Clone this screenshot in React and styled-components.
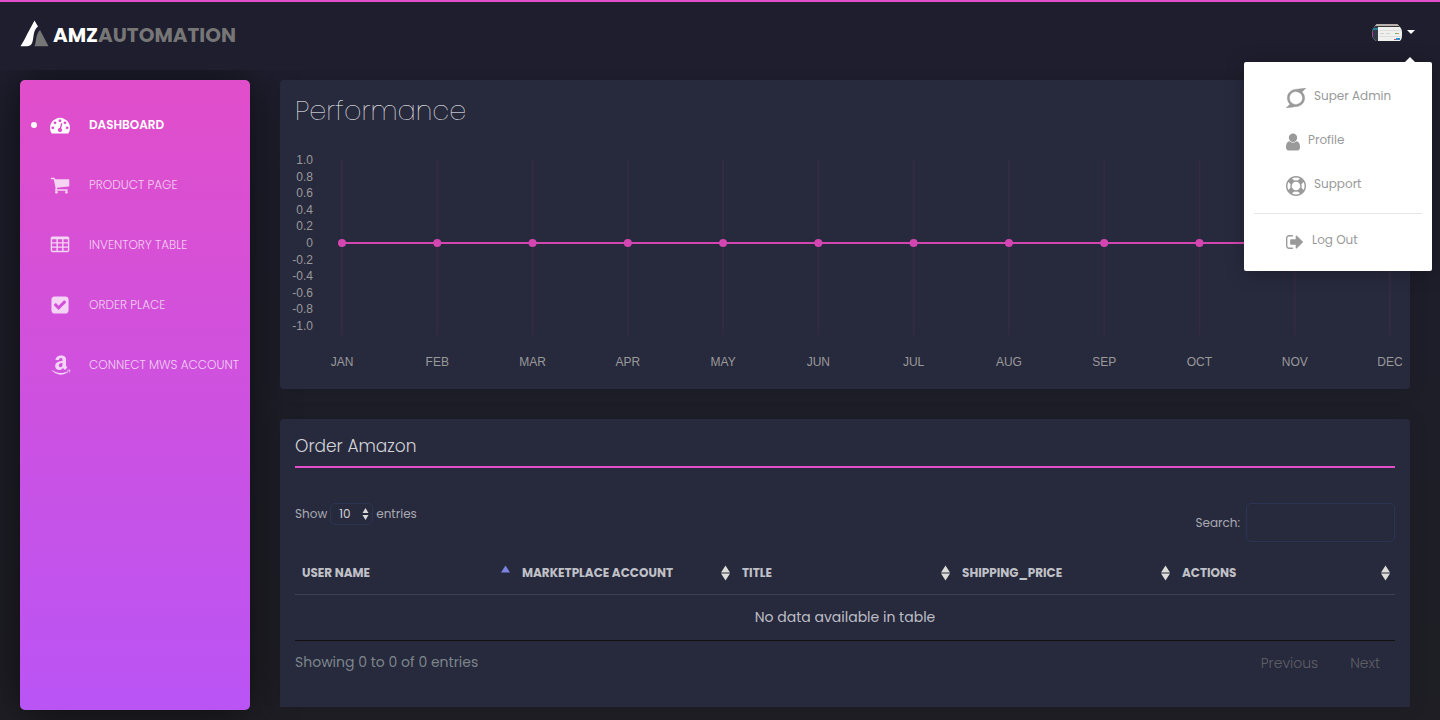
import React from "react";
import styled, { createGlobalStyle, css } from "styled-components";
import { FaAmazon, FaSuperpowers } from "react-icons/fa";

const GlobalStyle = createGlobalStyle`
  *, *::before, *::after { box-sizing: border-box; }
  body {
    margin: 0;
    min-height: 100vh;
    background: linear-gradient(#1e1e2f, #1e1e24) fixed;
    color: #c5c6cc;
    font-family: Poppins, Inter, sans-serif;
    font-size: 14px;
    overflow: hidden;
  }
  h1, h2, ul { margin: 0; padding: 0; }
  ul { list-style: none; }
  a { text-decoration: none; }
`;

/* ---------- icons ---------- */

const Glyph = styled.svg`
  display: block;
  flex: none;
  height: 20px;
  fill: currentColor;
`;

const glyphs = {
  gauge: {
    box: "0 0 1792 1792",
    width: 20,
    d: "M384 1152q0-53-37.5-90.5t-90.5-37.5-90.5 37.5-37.5 90.5 37.5 90.5 90.5 37.5 90.5-37.5 37.5-90.5zm192-448q0-53-37.5-90.5t-90.5-37.5-90.5 37.5-37.5 90.5 37.5 90.5 90.5 37.5 90.5-37.5 37.5-90.5zm428 481l101-382q6-26-7.5-48.5t-38.5-29.5-48 6.5-30 39.5l-101 382q-60 5-107 43.5t-63 98.5q-20 77 20 146t117 89 146-20 89-117q16-60-6-117t-72-91zm660-33q0-53-37.5-90.5t-90.5-37.5-90.5 37.5-37.5 90.5 37.5 90.5 90.5 37.5 90.5-37.5 37.5-90.5zm-640-640q0-53-37.5-90.5t-90.5-37.5-90.5 37.5-37.5 90.5 37.5 90.5 90.5 37.5 90.5-37.5 37.5-90.5zm448 192q0-53-37.5-90.5t-90.5-37.5-90.5 37.5-37.5 90.5 37.5 90.5 90.5 37.5 90.5-37.5 37.5-90.5zm320 448q0 261-141 483-19 29-54 29h-1402q-35 0-54-29-141-221-141-483 0-182 71-348t191-286 286-191 348-71 348 71 286 191 191 286 71 348z",
  },
  cart: {
    box: "0 0 1792 1792",
    width: 20,
    d: "M704 1536q0 52-38 90t-90 38-90-38-38-90 38-90 90-38 90 38 38 90zm896 0q0 52-38 90t-90 38-90-38-38-90 38-90 90-38 90 38 38 90zm128-1088v512q0 24-16.5 42.5t-40.5 21.5l-1044 122q13 60 13 70 0 16-24 64h920q26 0 45 19t19 45-19 45-45 19h-1024q-26 0-45-19t-19-45q0-11 8-31.5t16-36 21.5-40 15.5-29.5l-177-823h-204q-26 0-45-19t-19-45 19-45 45-19h256q16 0 28.5 6.5t19.5 15.5 13 24.5 8 26 5.5 29.5 4.5 26h1201q26 0 45 19t19 45z",
  },
  table: {
    box: "0 0 1792 1792",
    width: 20,
    d: "M224 128h1344q66 0 113 47t47 113v1088q0 66-47 113t-113 47h-1344q-66 0-113-47t-47-113v-1088q0-66 47-113t113-47zM192 384h384v256h-384zM704 384h384v256h-384zM1216 384h384v256h-384zM192 768h384v256h-384zM704 768h384v256h-384zM1216 768h384v256h-384zM192 1152h384v256h-384zM704 1152h384v256h-384zM1216 1152h384v256h-384z",
  },
  check: {
    box: "0 0 1792 1792",
    width: 20,
    d: "M813 1299l614-614q19-19 19-45t-19-45l-102-102q-19-19-45-19t-45 19l-467 467-211-211q-19-19-45-19t-45 19l-102 102q-19 19-19 45t19 45l358 358q19 19 45 19t45-19zm851-883v960q0 119-84.5 203.5t-203.5 84.5h-960q-119 0-203.5-84.5t-84.5-203.5v-960q0-119 84.5-203.5t203.5-84.5h960q119 0 203.5 84.5t84.5 203.5z",
  },
  user: {
    box: "256 0 1280 1792",
    width: 14,
    d: "M1536 1399q0 109-62.5 187t-150.5 78h-854q-88 0-150.5-78t-62.5-187q0-85 8.5-160.5t31.5-152 58.5-131 94-89 134.5-34.5q131 128 313 128t313-128q76 0 134.5 34.5t94 89 58.5 131 31.5 152 8.5 160.5zm-256-887q0 159-112.5 271.5t-271.5 112.5-271.5-112.5-112.5-271.5 112.5-271.5 271.5-112.5 271.5 112.5 112.5 271.5z",
  },
  ring: {
    box: "0 0 1792 1792",
    width: 20,
    d: "M896 0q182 0 348 71t286 191 191 286 71 348-71 348-191 286-286 191-348 71-348-71-286-191-191-286-71-348 71-348 191-286 286-191 348-71zm0 128q-190 0-361 90l194 194q82-28 167-28t167 28l194-194q-171-90-361-90zm-678 1129l194-194q-28-82-28-167t28-167l-194-194q-90 171-90 361t90 361zm678 407q190 0 361-90l-194-194q-82 28-167 28t-167-28l-194 194q171 90 361 90zm0-384q159 0 271.5-112.5t112.5-271.5-112.5-271.5-271.5-112.5-271.5 112.5-112.5 271.5 112.5 271.5 271.5 112.5zm484-217l194 194q90-171 90-361t-90-361l-194 194q28 82 28 167t-28 167z",
  },
  signOut: {
    box: "64 0 1664 1792",
    width: 18,
    d: "M704 1440q0 4 1 20t.5 26.5-3 23.5-10 19.5-20.5 6.5h-320q-119 0-203.5-84.5t-84.5-203.5v-704q0-119 84.5-203.5t203.5-84.5h320q13 0 22.5 9.5t9.5 22.5q0 4 1 20t.5 26.5-3 23.5-10 19.5-20.5 6.5h-320q-66 0-113 47t-47 113v704q0 66 47 113t113 47h312l11.5 1 11.5 3 8 5.500 7 9 2 13.500zm928-544q0 26-19 45l-544 544q-19 19-45 19t-45-19-19-45v-288h-448q-26 0-45-19t-19-45v-384q0-26 19-45t45-19h448v-288q0-26 19-45t45-19 45 19l544 544q19 19 19 45z",
  },
};

function Icon({ name }) {
  if (name === "amazon") return <FaAmazon size={22} aria-hidden="true" />;
  if (name === "superpowers") {
    return (
      <Glyph viewBox="0 32 448 448" width={20} stroke="currentColor" strokeWidth="8" aria-hidden="true">
        <FaSuperpowers size={512} x="-32" stroke="currentColor" strokeWidth="8" />
      </Glyph>
    );
  }
  const g = glyphs[name];
  return (
    <Glyph viewBox={g.box} width={g.width} aria-hidden="true">
      <path fillRule="evenodd" d={g.d} />
    </Glyph>
  );
}

/* ---------- header ---------- */

const Header = styled.header`
  position: relative;
  z-index: 2;
  display: flex;
  align-items: center;
  justify-content: space-between;
  height: 70px;
  padding: 0 25px 8px 20px;
  border-top: 2px solid #e14eca;
  background: #1e1e2e;
`;

const Brand = styled.a`
  display: flex;
  align-items: center;
  gap: 4px;
  padding-top: 2px;
  color: #fff;
  font: 700 20px/28px Poppins, Lato, sans-serif;
`;

const BrandName = styled.span`
  padding-top: 3px;
`;

const BrandTail = styled.span`
  color: #777676;
`;

const Account = styled.div`
  position: relative;
`;

const AccountButton = styled.button`
  display: flex;
  align-items: center;
  gap: 5px;
  padding: 0;
  border: 0;
  background: none;
  cursor: pointer;
`;

const Menu = styled.div`
  position: absolute;
  top: 38px;
  right: -17px;
  width: 188px;
  padding: 12px 10px 9px;
  border-radius: 2px;
  background: #fff;
  box-shadow: 1px 2px 20px rgba(0, 0, 0, 0.25);

  &::before {
    content: "";
    position: absolute;
    top: -5px;
    right: 17px;
    border: solid transparent;
    border-width: 0 5px 5px;
    border-bottom-color: #fff;
  }
`;

const MenuItem = styled.a`
  display: flex;
  align-items: center;
  gap: 8px;
  height: 44px;
  padding: 4px 0 0 32px;
  color: #9a9a9a;
  font-size: 12px;
  line-height: 20px;
  white-space: nowrap;
`;

const MenuText = styled.span`
  padding-bottom: 4px;
`;

const Divider = styled.hr`
  margin: 7px 0 4px;
  border: 0;
  border-top: 1px solid #e6e6e6;
`;

/* ---------- page ---------- */

const Body = styled.div`
  display: flex;
  align-items: flex-start;
  gap: 30px;
  padding: 10px 30px 0 20px;
`;

const Sidebar = styled.nav`
  flex: none;
  width: 230px;
  min-height: calc(100vh - 90px);
  padding-top: 15px;
  border-radius: 5px;
  background: linear-gradient(0deg, #ba54f5, #e14eca);
  box-shadow: 0 0 45px rgba(0, 0, 0, 0.6);
`;

const NavLink = styled.a`
  display: flex;
  align-items: center;
  height: 60px;
  padding-left: 11px;
  color: #fff;
  font-size: 12px;
  font-weight: ${(p) => (p.$active ? 600 : 300)};
  text-transform: uppercase;
  white-space: nowrap;

  &::before {
    content: "";
    width: 6px;
    height: 6px;
    border-radius: 50%;
    background: ${(p) => (p.$active ? "#fff" : "transparent")};
  }
`;

const NavIcon = styled.span`
  display: flex;
  width: 39px;
  margin-left: 13px;
  opacity: ${(p) => (p.$active ? 1 : 0.75)};
`;

const NavText = styled.span`
  opacity: ${(p) => (p.$active ? 1 : 0.7)};
`;

const Main = styled.main`
  flex: 1;
  min-width: 0;
  display: flex;
  flex-direction: column;
  gap: 30px;
`;

const Card = styled.section`
  padding: 15px;
  border-radius: ${(p) => (p.$open ? "4px 4px 0 0" : "4px")};
  background: #27293d;
  box-shadow: 0 1px 20px rgba(0, 0, 0, 0.1);
`;

const CardTitle = styled.h1`
  color: #fff;
  font-size: 27px;
  font-weight: 200;
  line-height: 32px;
`;

const SectionTitle = styled.h2`
  height: 34px;
  border-bottom: 2px solid #e14eca;
  color: #d4d4d8;
  font-size: 17px;
  font-weight: 300;
  line-height: 24px;
`;

/* ---------- chart ---------- */

const ChartBox = styled.div`
  padding: 33px 5px 0 47px;
`;

const Plot = styled.svg`
  display: block;
  width: 100%;
  height: 214px;
  overflow: visible;
  font: 12px "Liberation Sans", Arial, sans-serif;
  fill: #9a9a9a;
`;

const months = ["JAN", "FEB", "MAR", "APR", "MAY", "JUN", "JUL", "AUG", "SEP", "OCT", "NOV", "DEC"];
const ticks = ["1.0", "0.8", "0.6", "0.4", "0.2", "0", "-0.2", "-0.4", "-0.6", "-0.8", "-1.0"];

function Chart() {
  const at = (i) => `${(i * 100) / (months.length - 1)}%`;
  return (
    <ChartBox>
      <Plot role="img" aria-label="Performance by month">
        {ticks.map((t, i) => (
          <text key={t} x="-29" y={Math.round(4 + i * 16.6)} textAnchor="end">
            {t}
          </text>
        ))}
        {months.map((m, i) => (
          <line key={m} x1={at(i)} x2={at(i)} y1="0" y2="175" stroke="#322b41" strokeWidth="2" />
        ))}
        <line x1="0" x2="100%" y1="83" y2="83" stroke="#d346b1" strokeWidth="2" />
        {months.map((m, i) => (
          <React.Fragment key={m}>
            <circle cx={at(i)} cy="83" r="4" fill="#d346b1" />
            <text x={at(i)} y="206" textAnchor="middle">
              {m}
            </text>
          </React.Fragment>
        ))}
      </Plot>
    </ChartBox>
  );
}

/* ---------- table ---------- */

const Controls = styled.div`
  display: flex;
  justify-content: space-between;
  align-items: flex-start;
  padding-top: 35px;
`;

const ControlLabel = styled.label`
  display: flex;
  align-items: center;
  gap: ${(p) => p.$gap}px;
  color: #a9aab3;
  font-size: 12px;
`;

const SelectWrap = styled.span`
  position: relative;
  display: block;

  svg {
    position: absolute;
    top: 5px;
    right: 4px;
    pointer-events: none;
  }
`;

const fieldLook = css`
  border: 1px solid #2b3553;
  border-radius: 5px;
  background: transparent;
  color: #d0d0d4;
  font: 12px Poppins, Inter, sans-serif;
`;

const PageSize = styled.select`
  ${fieldLook}
  display: block;
  appearance: none;
  width: 43px;
  height: 22px;
  padding: 0 0 2px 8px;
`;

const SearchField = styled.input`
  ${fieldLook}
  width: 149px;
  height: 39px;
  padding: 0 12px;
`;

const Table = styled.table`
  width: 100%;
  margin-top: 10px;
  border-collapse: collapse;
  table-layout: fixed;
`;

const HeadCell = styled.th`
  height: 42px;
  padding: 0 5px 0 7px;
  border-bottom: 1px solid #3d3f54;
  text-align: left;
`;

const SortButton = styled.button`
  display: flex;
  align-items: center;
  justify-content: space-between;
  width: 100%;
  padding: 0;
  border: 0;
  background: none;
  color: #c0c1c7;
  font: 700 12px/18px Poppins, Inter, sans-serif;
  text-transform: uppercase;
  white-space: nowrap;
`;

const EmptyCell = styled.td`
  height: 46px;
  padding: 0;
  border-bottom: 1px solid #111;
  color: #bdbec5;
  text-align: center;
`;

const Footer = styled.div`
  display: flex;
  justify-content: space-between;
  align-items: center;
  height: 43px;
  margin-bottom: 8px;
  color: #7c868b;
`;

const Pager = styled.div`
  display: flex;
  gap: 32px;
  padding: 2px 15px 0 0;
`;

const PagerButton = styled.button`
  padding: 0;
  border: 0;
  background: none;
  color: #5f6066;
  font: 300 14px/20px Poppins, Inter, sans-serif;
`;

function SortMark({ sorted }) {
  return (
    <svg width="9" height="16" viewBox="0 0 9 16" aria-hidden="true">
      <path d="M4.500.5 9 7.500H0z" fill={sorted ? "#7b83e0" : "#deded9"} />
      {!sorted && <path d="M4.500 15.500 0 8.500h9z" fill="#deded9" />}
    </svg>
  );
}

function SelectArrows() {
  return (
    <svg width="7" height="12" viewBox="0 0 7 12" aria-hidden="true">
      <path d="M3.500 0 6.500 5H.5zM3.500 12 .5 7h6z" fill="#d8d8d4" />
    </svg>
  );
}

const navItems = [
  ["gauge", "Dashboard"],
  ["cart", "Product Page"],
  ["table", "Inventory Table"],
  ["check", "Order Place"],
  ["amazon", "Connect MWS Account"],
];

const columns = ["User Name", "Marketplace Account", "Title", "Shipping_Price", "Actions"];

function BrandMark() {
  return (
    <svg width="29" height="27" viewBox="0 0 29 27" aria-hidden="true">
      <path d="M14.500.5 18 6.500C14.500 9 14 13 13.300 17.500 12.500 22.500 12 26 7 26.200H.5Q4 21 7.500 13.500z" fill="#fff" />
      <path d="M20 10 28.500 26.200H14.500C16.500 22 15.500 14 20 10z" fill="#777676" />
    </svg>
  );
}

function Avatar() {
  return (
    <svg width="30" height="17" viewBox="0 0 30 17" aria-hidden="true">
      <defs>
        <clipPath id="avatar-shape">
          <path d="M0 10Q0 4 5 0H25Q30 4 30 8V12Q30 15 28 17H4Q0 14 0 10z" />
        </clipPath>
      </defs>
      <g clipPath="url(#avatar-shape)">
        <rect width="30" height="17" fill="#f0f0ee" />
        <rect width="30" height="2" fill="#b9b2ac" />
        <rect y="2" width="30" height="1" fill="#37393d" />
        <rect y="3" width="6" height="14" fill="#303b46" />
        <rect y="4" width="6" height="2" fill="#267b9c" />
        <rect y="8" width="1" height="5" fill="#b43eb0" />
        <path d="M7 6.500h22M7 12.500h22" stroke="#dedede" />
        <path d="M8 9.500h4M14 9.500h4" stroke="#cfd0d0" />
        <path d="M23 9.500h2" stroke="#5faa6b" />
        <path d="M25 9.500h2" stroke="#cf9a4b" />
        <path d="M22 15.500h2" stroke="#d05062" />
        <path d="M24 15h4" stroke="#2d8fd0" strokeWidth="2" />
      </g>
    </svg>
  );
}

export default function App() {
  return (
    <>
      <GlobalStyle />
      <Header>
        <Brand href="#home">
          <BrandMark />
          <BrandName>
            AMZ<BrandTail>AUTOMATION</BrandTail>
          </BrandName>
        </Brand>
        <Account>
          <AccountButton type="button" aria-label="Account menu" aria-expanded="true">
            <Avatar />
            <svg width="8" height="4" viewBox="0 0 8 4" aria-hidden="true">
              <path d="M0 0h8L4 4z" fill="#fff" />
            </svg>
          </AccountButton>
          <Menu>
            <MenuItem href="#admin">
              <Icon name="superpowers" />
              <MenuText>Super Admin</MenuText>
            </MenuItem>
            <MenuItem href="#profile">
              <Icon name="user" />
              <MenuText>Profile</MenuText>
            </MenuItem>
            <MenuItem href="#support">
              <Icon name="ring" />
              <MenuText>Support</MenuText>
            </MenuItem>
            <Divider />
            <MenuItem href="#logout">
              <Icon name="signOut" />
              <MenuText>Log Out</MenuText>
            </MenuItem>
          </Menu>
        </Account>
      </Header>

      <Body>
        <Sidebar aria-label="Main">
          <ul>
            {navItems.map(([icon, label], i) => (
              <li key={label}>
                <NavLink href={`#${icon}`} $active={i === 0}>
                  <NavIcon $active={i === 0}>
                    <Icon name={icon} />
                  </NavIcon>
                  <NavText $active={i === 0}>{label}</NavText>
                </NavLink>
              </li>
            ))}
          </ul>
        </Sidebar>

        <Main>
          <Card>
            <CardTitle>Performance</CardTitle>
            <Chart />
          </Card>

          <Card $open>
            <SectionTitle>Order Amazon</SectionTitle>
            <Controls>
              <ControlLabel $gap={3}>
                Show
                <SelectWrap>
                  <PageSize defaultValue="10">
                    <option>10</option>
                    <option>25</option>
                    <option>50</option>
                    <option>100</option>
                  </PageSize>
                  <SelectArrows />
                </SelectWrap>
                entries
              </ControlLabel>
              <ControlLabel $gap={6}>
                Search:
                <SearchField type="search" />
              </ControlLabel>
            </Controls>
            <Table>
              <thead>
                <tr>
                  {columns.map((c, i) => (
                    <HeadCell key={c} scope="col" aria-sort={i === 0 ? "ascending" : "none"}>
                      <SortButton type="button">
                        {c}
                        <SortMark sorted={i === 0} />
                      </SortButton>
                    </HeadCell>
                  ))}
                </tr>
              </thead>
              <tbody>
                <tr>
                  <EmptyCell colSpan={columns.length}>No data available in table</EmptyCell>
                </tr>
              </tbody>
            </Table>
            <Footer>
              <span>Showing 0 to 0 of 0 entries</span>
              <Pager>
                <PagerButton type="button">Previous</PagerButton>
                <PagerButton type="button">Next</PagerButton>
              </Pager>
            </Footer>
          </Card>
        </Main>
      </Body>
    </>
  );
}
